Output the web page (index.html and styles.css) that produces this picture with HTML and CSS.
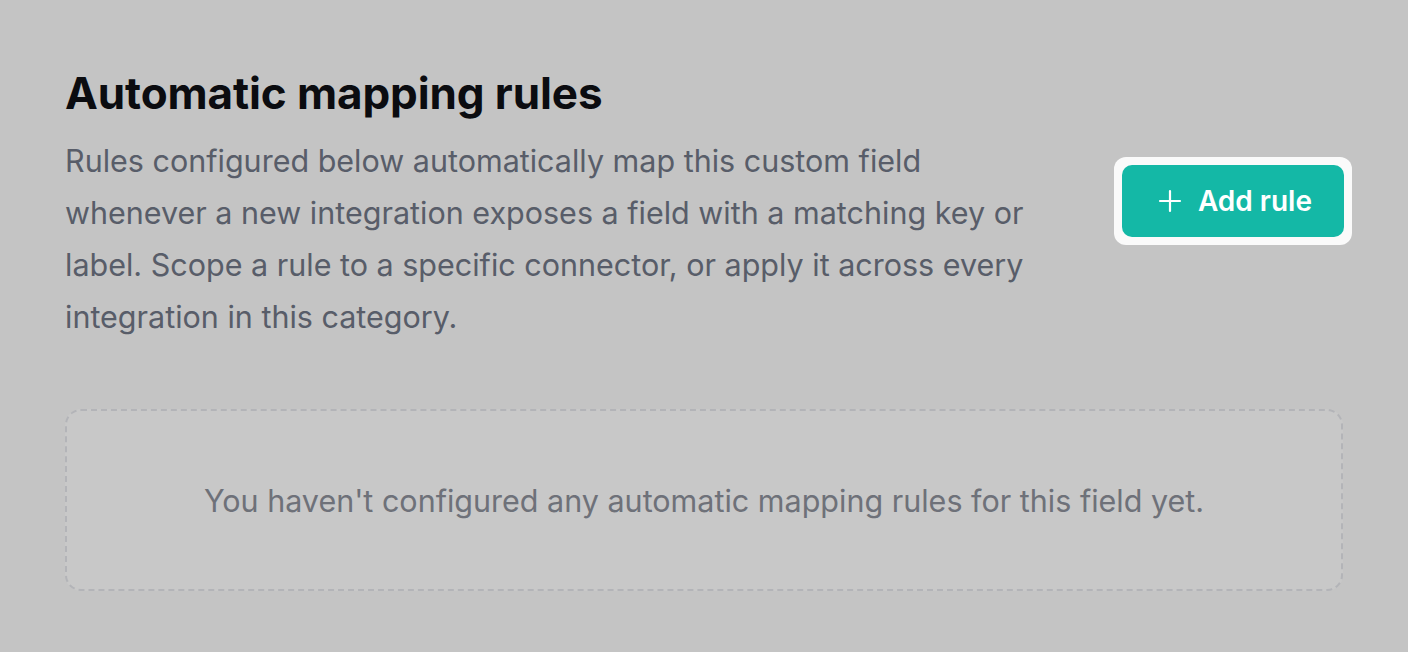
FILE: index.html
```html
<!DOCTYPE html>
<html lang="en">
<head>
<title>Automatic mapping rules</title>
<link rel="stylesheet" href="styles.css">
</head>
<body>
<div class="section">
    <div class="header">
        <div class="intro">
            <h2>Automatic mapping rules</h2>
            <p>Rules configured below automatically map this custom field whenever a new integration exposes a field with a matching key or label. Scope a rule to a specific connector, or apply it across every integration in this category.</p>
        </div>
        <div class="spotlight">
            <button class="btn-add">
                <svg width="24" height="24" viewBox="0 0 24 24" fill="none" stroke="currentColor" stroke-width="2.2" stroke-linecap="round"><path d="M12 2v20M2 12h20"/></svg>
                Add rule
            </button>
        </div>
    </div>

    <div class="empty">You haven't configured any automatic mapping rules for this field yet.</div>
</div>
</body>
</html>
```

FILE: styles.css
```css
body { margin: 0; background: #c4c4c4; font-family: Inter, "Noto Sans", sans-serif; }
.section { padding: 67px 65px 0 65px; }
.header { display: flex; align-items: center; justify-content: space-between; gap: 40px; }
.intro { max-width: 960px; }
h2 { margin: 0; font-size: 44px; line-height: 52px; font-weight: 700; color: #0b0c10; letter-spacing: -0.1px; }
p { margin: 16px 0 0 0; font-size: 30.5px; line-height: 52px; color: #585d69; }

.spotlight { flex-shrink: 0; background: #fafafa; padding: 8px; border-radius: 12px; margin: 0 -9px 8px 0; }
.btn-add { display: flex; align-items: center; gap: 16px; height: 72px; padding: 0 32px 0 36px; border: 0; border-radius: 10px; background: #14b8a6; color: #fff; font-family: inherit; font-size: 28px; font-weight: 600; white-space: nowrap; cursor: pointer; }

.empty { margin-top: 66px; border: 2px dashed #b3b4b8; border-radius: 16px; background: #c8c8c8; padding: 65px 20px 63px; text-align: center; font-size: 30.5px; line-height: 50px; color: #6e7179; }
```
